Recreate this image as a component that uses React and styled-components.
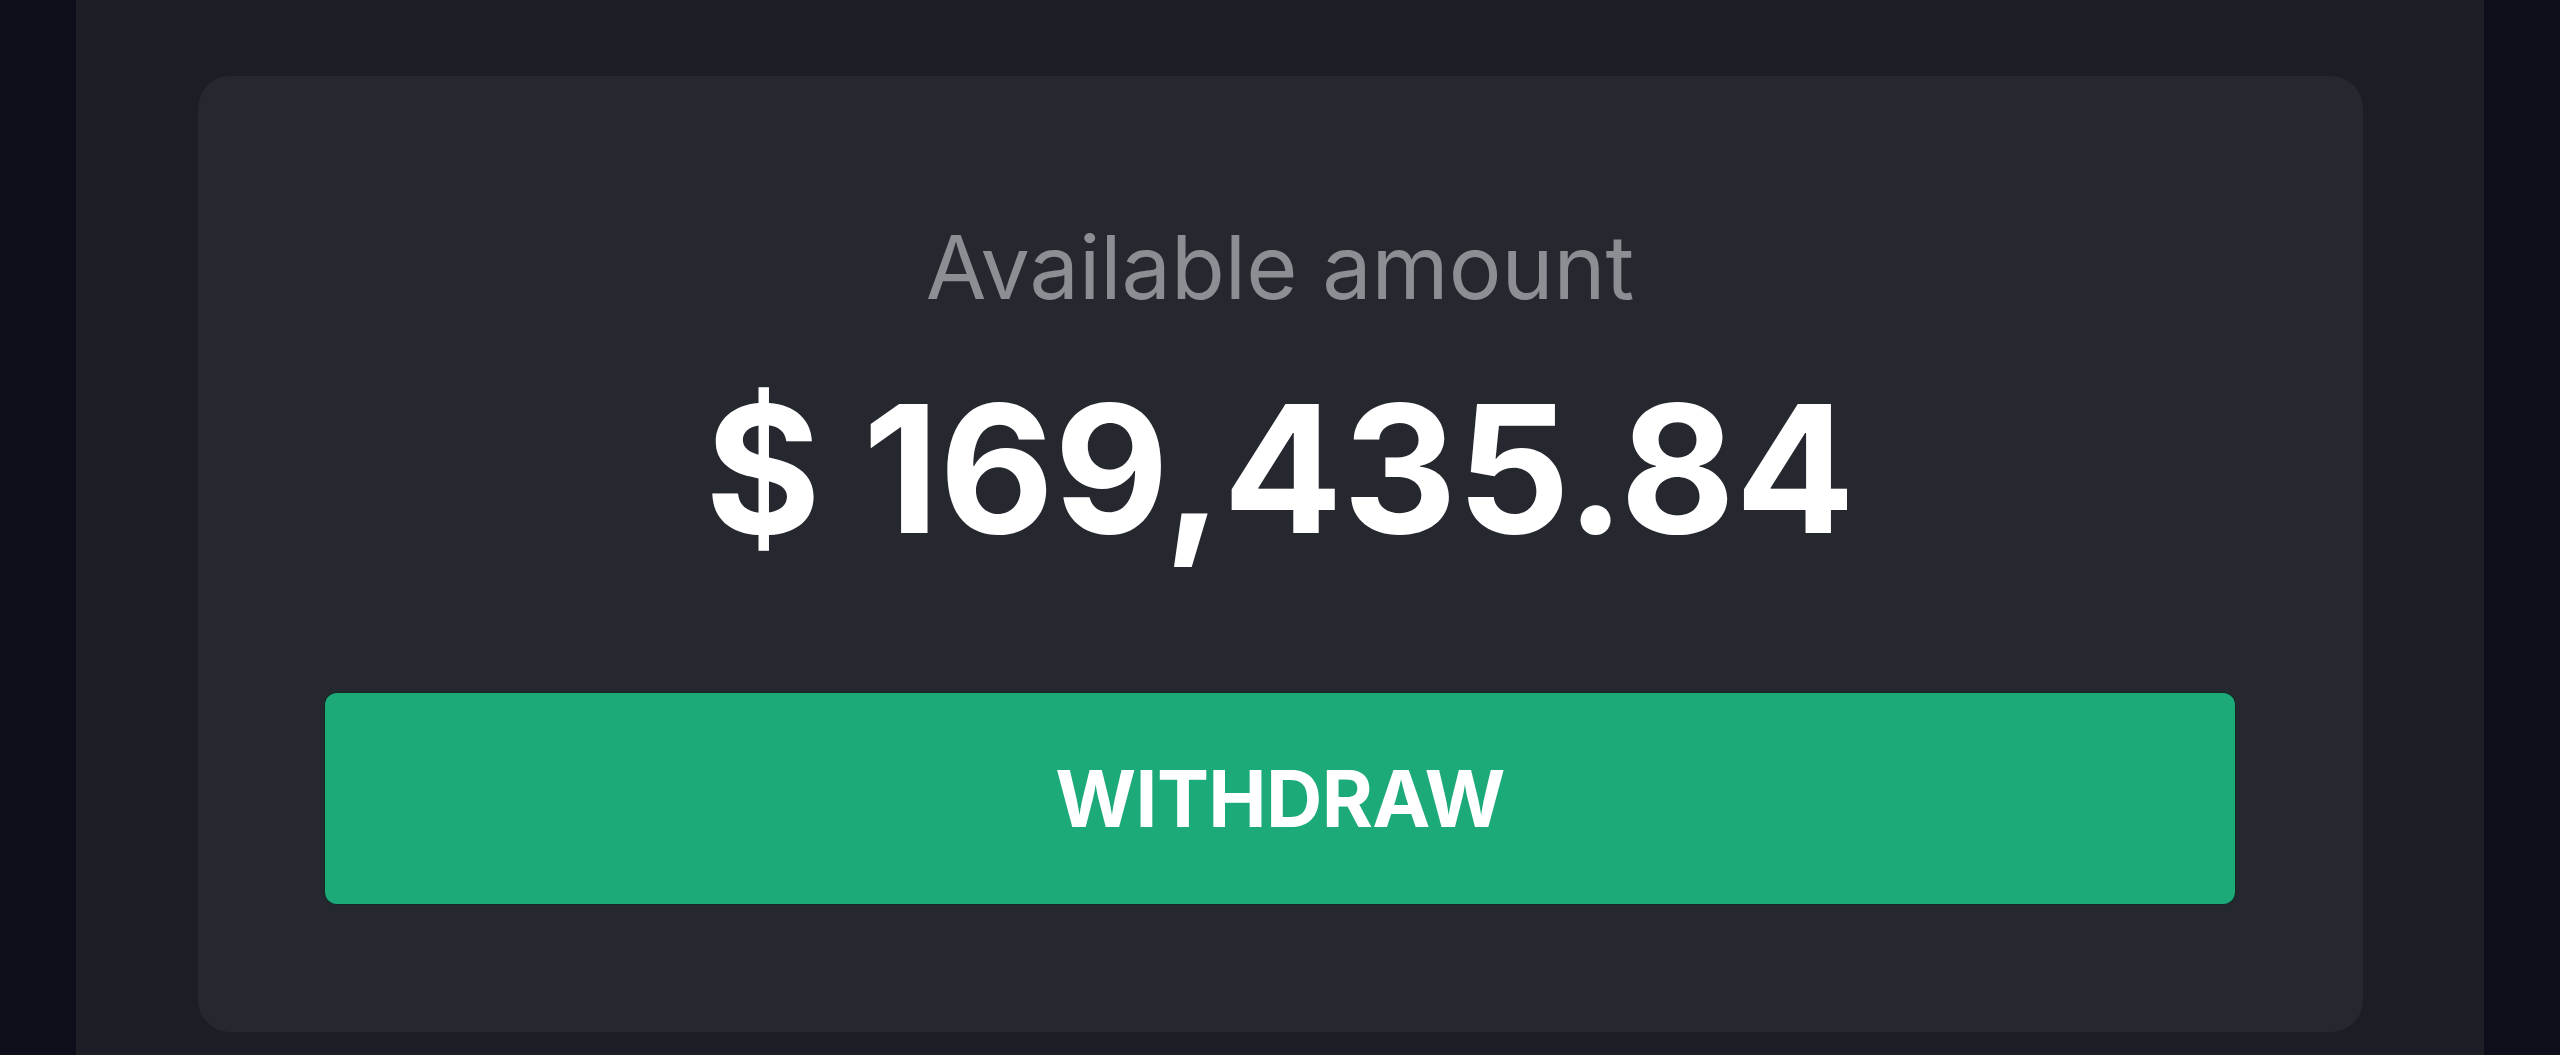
import styled, { createGlobalStyle } from "styled-components";

const GlobalStyle = createGlobalStyle`
  html, body {
    margin: 0;
    padding: 0;
    background: #0c0f19;
  }
  body {
    font-family: Inter, "Noto Sans", sans-serif;
  }
`;

const Page = styled.div`
  display: flex;
  justify-content: center;
  min-height: 1055px;
  padding: 0 76px;
  box-sizing: border-box;
`;

const Panel = styled.main`
  flex: 1;
  background: #1c1e26;
  padding: 76px 121px 24px 122px;
  box-sizing: border-box;
`;

const Card = styled.section`
  display: flex;
  flex-direction: column;
  align-items: center;
  background: #262830;
  border-radius: 32px;
  padding: 139px 128px 128px 127px;
`;

const Label = styled.p`
  margin: 0;
  font-size: 88px;
  line-height: 1.2;
  font-weight: 400;
  color: #8d8e93;
`;

const Amount = styled.h2`
  margin: 42px 0 0;
  font-size: 177px;
  line-height: 1.2;
  font-weight: 700;
  color: #ffffff;
`;

const WithdrawButton = styled.button`
  margin-top: 118px;
  width: 100%;
  height: 211px;
  border: none;
  border-radius: 12px;
  background: #1daa79;
  box-shadow: 0 0 0 1px rgba(0, 40, 25, 0.5);
  color: #ffffff;
  font-family: Inter, "Noto Sans", sans-serif;
  font-size: 78px;
  font-weight: 700;
  letter-spacing: -0.6px;
  cursor: pointer;
`;

const App = () => {
  return (
    <>
      <GlobalStyle />
      <Page>
        <Panel>
          <Card>
            <Label>Available amount</Label>
            <Amount>$ 169,435.84</Amount>
            <WithdrawButton>WITHDRAW</WithdrawButton>
          </Card>
        </Panel>
      </Page>
    </>
  );
};

export default App;
